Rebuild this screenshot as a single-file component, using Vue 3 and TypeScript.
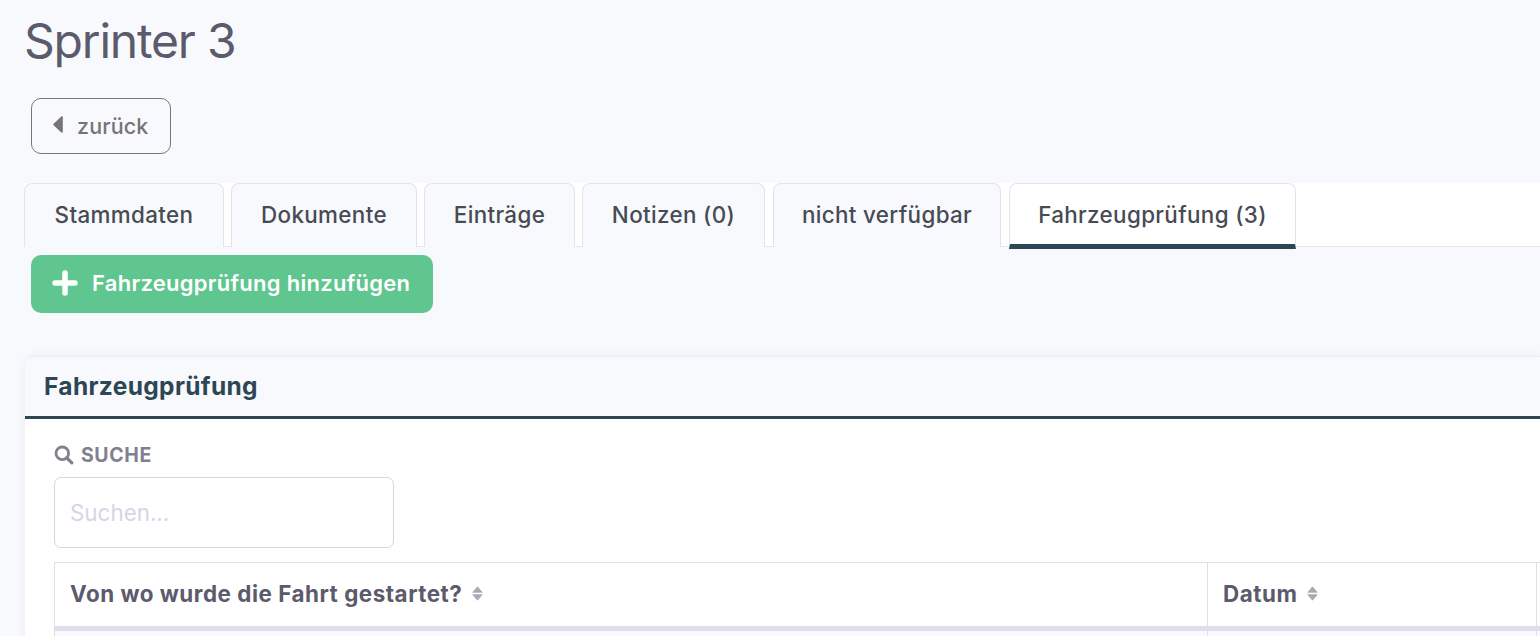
<script setup lang="ts">
interface Tab { label: string; width: number; wide?: boolean; active?: boolean }
const tabs: Tab[] = [
  { label: 'Stammdaten', width: 200 },
  { label: 'Dokumente', width: 186 },
  { label: 'Einträge', width: 151 },
  { label: 'Notizen (0)', width: 183 },
  { label: 'nicht verfügbar', width: 228, wide: true },
  { label: 'Fahrzeugprüfung (3)', width: 287, wide: true, active: true },
]
const columns = ['Von wo wurde die Fahrt gestartet?', 'Datum']
</script>

<template>
  <div class="page">
    <h1 class="title">Sprinter 3</h1>
    <button class="back" type="button">
      <svg class="back-icon" viewBox="0 0 10 17" width="10" height="17"><path d="M9.800 1.200v14.600a.9.9 0 0 1-1.500.7L.6 9.200a1 1 0 0 1 0-1.400L8.300.5a.9.9 0 0 1 1.500.7z" fill="currentColor" /></svg>
      <span>zurück</span>
    </button>
    <div class="tabs">
      <div
        v-for="t in tabs"
        :key="t.label"
        class="tab"
        :class="{ active: t.active, wide: t.wide }"
        :style="{ width: t.width + 'px' }"
      >{{ t.label }}</div>
    </div>
    <button class="add" type="button">
      <svg viewBox="0 0 26 26" width="26" height="26"><path d="M13 3v20M3 13h20" stroke="#fff" stroke-width="5.500" stroke-linecap="round" fill="none" /></svg>
      <span>Fahrzeugprüfung hinzufügen</span>
    </button>
    <section class="card">
      <header class="card-head">Fahrzeugprüfung</header>
      <div class="card-body">
        <label class="search-label">
          <svg viewBox="0 0 20 20" width="20" height="20"><circle cx="8.300" cy="8.300" r="6.300" fill="none" stroke="currentColor" stroke-width="2.800" /><path d="M12.800 12.800l5 5" stroke="currentColor" stroke-width="3.200" stroke-linecap="round" /></svg>
          <span>SUCHE</span>
        </label>
        <input class="search" type="text" placeholder="Suchen..." />
        <div class="table">
          <div class="row head">
            <div v-for="c in columns" :key="c" class="cell">
              <span>{{ c }}</span>
              <svg class="sort" viewBox="0 0 11 15" width="11" height="15"><path d="M5.500 0.800L10.200 6.300H0.800zM5.500 14.200L0.800 8.700H10.200z" fill="currentColor" stroke="currentColor" stroke-width="0.800" stroke-linejoin="round" /></svg>
            </div>
            <div class="cell rest"></div>
          </div>
          <div class="row body">
            <div class="cell"></div>
            <div class="cell"></div>
            <div class="cell rest"></div>
          </div>
        </div>
      </div>
    </section>
  </div>
</template>

<style scoped>
.page {
  height: 636px;
  overflow: hidden;
  box-sizing: border-box;
  padding: 12px 0 0 24px;
  background: #f8f9fd;
  font-family: Inter, "Liberation Sans", sans-serif;
}
.title {
  margin: 0;
  font-size: 48px;
  line-height: 58px;
  font-weight: 400;
  letter-spacing: -1.200px;
  color: #5b5b6b;
}
.back {
  display: flex;
  align-items: center;
  gap: 14px;
  box-sizing: border-box;
  width: 140px;
  height: 56px;
  margin: 28px 0 0 7px;
  padding: 0 0 0 21px;
  border: 1px solid #777;
  border-radius: 10px;
  background: transparent;
  color: #757575;
  font: 500 21.500px Inter, "Liberation Sans", sans-serif;
  letter-spacing: 0.150px;
}
.back-icon { margin-top: -3px; flex: none; }
.tabs {
  display: flex;
  gap: 7px;
  height: 63px;
  margin-top: 29px;
  background: #fff;
  border-bottom: 1px solid #e6e8ee;
}
.tab {
  box-sizing: border-box;
  flex: none;
  height: 64px;
  border: 1px solid #e2e4ea;
  border-bottom: 0;
  border-radius: 8px 8px 0 0;
  background: #f8f9fd;
  color: #474b54;
  font-size: 22.400px;
  letter-spacing: 0.350px;
  font-weight: 500;
  line-height: 62px;
  text-align: center;
  white-space: nowrap;
}
.tab.wide { margin-left: 1px; }
.tab.active {
  height: 66px;
  background: #fff;
  border-bottom: 5px solid #2d4654;
}
.add {
  display: flex;
  align-items: center;
  gap: 14px;
  box-sizing: border-box;
  width: 402px;
  height: 58px;
  margin: 8px 0 0 7px;
  padding: 0 0 2px 21px;
  border: 0;
  border-radius: 10px;
  background: #5fc68f;
  color: #fff;
  font: 600 22px Inter, "Liberation Sans", sans-serif;
  letter-spacing: 0.270px;
}
.card {
  margin: 43px 0 0 1px;
  background: #fff;
  border-radius: 10px 0 0 0;
  box-shadow: 0 0 8px rgba(60, 64, 100, 0.08);
}
.card-head {
  box-sizing: border-box;
  height: 63px;
  padding-left: 19px;
  background: #f8f9fd;
  border-radius: 10px 0 0 0;
  border-top: 1px solid #eceef3;
  border-bottom: 3px solid #2d4654;
  color: #2d4654;
  font-size: 24.500px;
  letter-spacing: 0.350px;
  font-weight: 700;
  line-height: 58px;
}
.card-body {
  padding: 25px 0 0 29px;
}
.search-label {
  display: flex;
  align-items: center;
  gap: 7px;
  height: 22px;
  color: #80808f;
  font-size: 19.500px;
  letter-spacing: 0.600px;
  font-weight: 700;
}
.search {
  display: block;
  box-sizing: border-box;
  width: 340px;
  height: 71px;
  margin-top: 11px;
  padding: 0 15px;
  border: 1px solid #d6d5e3;
  border-radius: 7px;
  background: #fff;
  font: 400 22.400px Inter, "Liberation Sans", sans-serif;
}
.search::placeholder { color: #d6d5e6; opacity: 1; }
.table {
  margin-top: 14px;
  border-top: 1px solid #dfdeea;
  border-left: 1px solid #dfdeea;
}
.row {
  display: grid;
  grid-template-columns: 1153px 329px 1fr;
}
.row.head {
  height: 63px;
  border-bottom: 5px solid #dfdeea;
  background: #fff;
}
.row.head .cell { padding-bottom: 2px; }
.row.body { height: 10px; background: #f8f9fd; }
.cell {
  display: flex;
  align-items: center;
  gap: 10px;
  padding-left: 15px;
  border-right: 1px solid #dfdeea;
  color: #5b5b6b;
  font-size: 22.400px;
  letter-spacing: 0.530px;
  font-weight: 700;
}
.rest { border-right: 0; }
.sort { color: #a9a9b6; flex: none; }
</style>
